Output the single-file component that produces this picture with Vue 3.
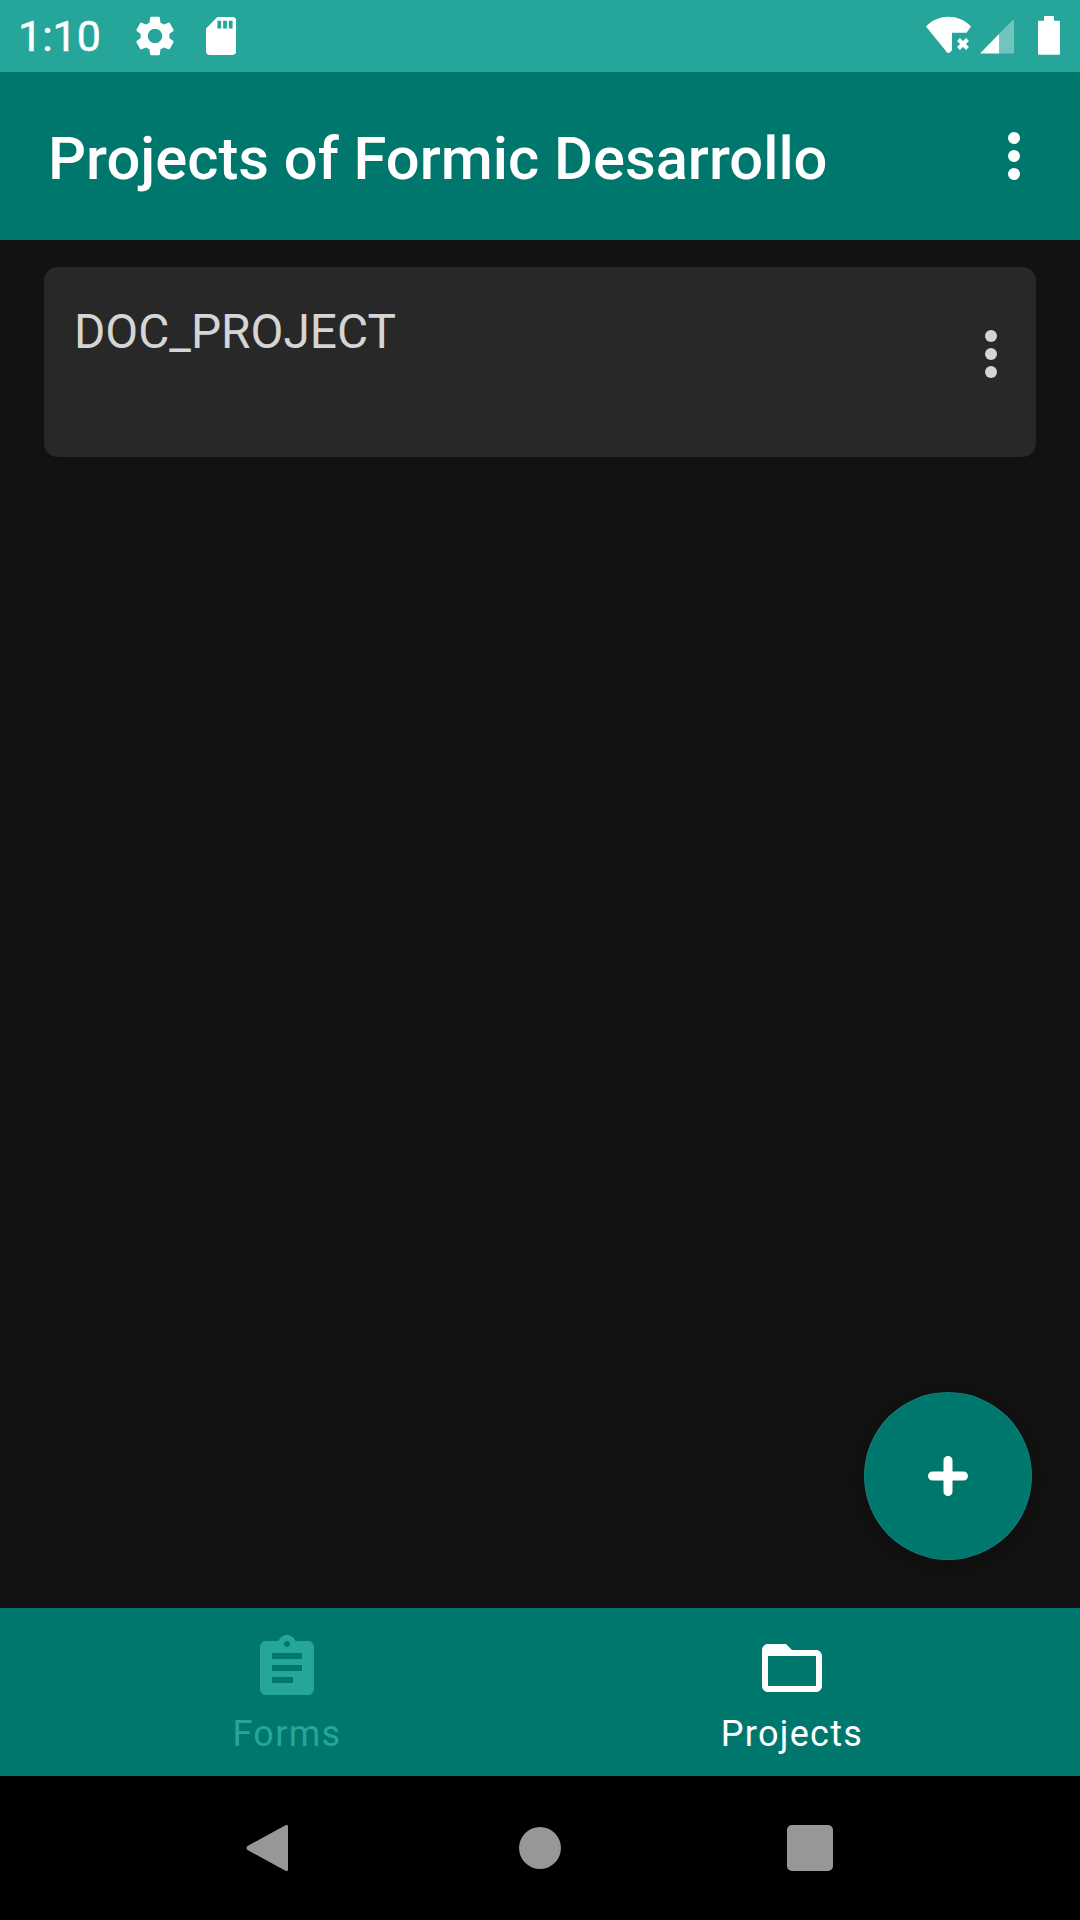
<script setup>
const tabs = [
  { label: 'Forms', active: false, d: 'M19 3h-4.18C14.4 1.84 13.3 1 12 1c-1.3 0-2.4.84-2.82 2H5c-1.1 0-2 .9-2 2v14c0 1.1.9 2 2 2h14c1.1 0 2-.9 2-2V5c0-1.1-.9-2-2-2zm-7 0c.55 0 1 .45 1 1s-.45 1-1 1-1-.45-1-1 .45-1 1-1zm2 14H7v-2h7v2zm3-4H7v-2h10v2zm0-4H7V7h10v2z' },
  { label: 'Projects', active: true, d: 'M20 6h-8l-2-2H4c-1.1 0-1.99.9-1.99 2L2 18c0 1.1.9 2 2 2h16c1.1 0 2-.9 2-2V8c0-1.1-.9-2-2-2zm0 12H4V8h16v10z' }
]
</script>

<template>
  <div class="screen">
    <div class="status-bar">
      <div class="status-left">
        <span class="time">1:10</span>
        <svg class="gear" viewBox="0 0 24 24"><path d="M19.14 12.94c.04-.3.06-.61.06-.94 0-.32-.02-.64-.07-.94l2.03-1.58c.18-.14.23-.41.12-.61l-1.92-3.32c-.12-.22-.37-.29-.59-.22l-2.39.96c-.5-.38-1.03-.7-1.62-.94l-.36-2.54c-.04-.24-.24-.41-.48-.41h-3.84c-.24 0-.43.17-.47.41l-.36 2.54c-.59.24-1.13.57-1.62.94l-2.39-.96c-.22-.08-.47 0-.59.22L2.74 8.87c-.12.21-.08.47.12.61l2.03 1.58c-.05.3-.09.63-.09.94s.02.64.07.94l-2.03 1.58c-.18.14-.23.41-.12.61l1.92 3.32c.12.22.37.29.59.22l2.39-.96c.5.38 1.03.7 1.62.94l.36 2.54c.05.24.24.41.48.41h3.84c.24 0 .44-.17.47-.41l.36-2.54c.59-.24 1.13-.56 1.62-.94l2.39.96c.22.08.47 0 .59-.22l1.92-3.32c.12-.22.07-.47-.12-.61l-2.01-1.58zM12 15.6c-1.98 0-3.6-1.62-3.6-3.6s1.62-3.6 3.6-3.6 3.6 1.62 3.6 3.6-1.62 3.6-3.6 3.6z" /></svg>
        <svg class="sd" viewBox="4 2 16 20"><path d="M18 2h-8L4.02 8 4 20c0 1.1.9 2 2 2h12c1.1 0 2-.9 2-2V4c0-1.1-.9-2-2-2zm-6 6h-2V4h2v4zm3 0h-2V4h2v4zm3 0h-2V4h2v4z" /></svg>
      </div>
      <div class="status-right">
        <svg class="wifi" viewBox="926 16 46 40">
          <path d="M926 26.5C932 20 940 16.7 948.5 16.7S965 20 971 26.5L966.500 32.700H952V50Q950.500 53 948.500 53T945.500 50.500Z" />
          <path d="M958.500 39.500L967.500 48.500M967.500 39.500L958.500 48.500" class="wifi-x" />
        </svg>
        <svg class="signal" viewBox="980 16 34 40">
          <path d="M999 34L1012.500 20.200Q1014 19.500 1014 21V52Q1014 53.500 1012.500 53.500H999Z" opacity="0.35" />
          <path d="M980 53.500L999 34V53.500Z" />
        </svg>
        <svg class="battery" viewBox="1038 16 22 40">
          <path d="M1044 16H1054V20.700H1059Q1060 20.700 1060 21.700V53.700Q1060 54.700 1059 54.700H1039Q1038 54.700 1038 53.700V21.700Q1038 20.700 1039 20.700H1044Z" />
        </svg>
      </div>
    </div>

    <header class="app-bar">
      <h1>Projects of Formic Desarrollo</h1>
      <div class="dots">
        <i></i><i></i><i></i>
      </div>
    </header>

    <main class="content">
      <div class="card">
        <span class="card-title">DOC_PROJECT</span>
        <div class="dots card-dots">
          <i></i><i></i><i></i>
        </div>
      </div>
      <button class="fab">
        <svg viewBox="0 0 40 40"><path d="M20 4.500V35.500M4.500 20H35.500" /></svg>
      </button>
    </main>

    <nav class="bottom-nav">
      <div v-for="tab in tabs" :key="tab.label" class="tab" :class="{ active: tab.active }">
        <svg viewBox="0 0 24 24"><path :d="tab.d" /></svg>
        <span>{{ tab.label }}</span>
      </div>
    </nav>

    <div class="system-nav">
      <svg class="back" viewBox="0 0 42 48"><path d="M39 1.500Q42 -0.500 42 3V45Q42 48.500 39 46.500L1.500 26Q-0.500 24 1.500 22Z" /></svg>
      <span class="home"></span>
      <span class="recent"></span>
    </div>
  </div>
</template>

<style>
body {
  background: #121212;
}
</style>

<style scoped>
.screen {
  width: 1080px;
  height: 1920px;
  display: flex;
  flex-direction: column;
  font-family: Roboto, sans-serif;
  background: #121212;
  overflow: hidden;
}

.status-bar {
  height: 72px;
  flex-shrink: 0;
  background: #26a69a;
  display: flex;
  justify-content: space-between;
  align-items: center;
  padding: 0 20px;
  fill: #fff;
}

.status-left,
.status-right {
  display: flex;
  align-items: center;
}

.time {
  width: 113px;
  margin-left: -2px;
  color: #fff;
  font-size: 43px;
  line-height: 48px;
  -webkit-text-stroke: 0.5px #fff;
}

.gear {
  width: 48px;
  height: 48px;
}

.sd {
  width: 30.4px;
  height: 38px;
  margin-left: 27px;
}

.wifi {
  width: 46px;
  height: 40px;
}

.wifi-x {
  fill: none;
  stroke: #fff;
  stroke-width: 4;
}

.signal {
  width: 34px;
  height: 40px;
  margin-left: 8px;
}

.battery {
  width: 22px;
  height: 40px;
  margin-left: 24px;
}

.app-bar {
  height: 168px;
  flex-shrink: 0;
  background: #00776c;
  display: flex;
  justify-content: space-between;
  align-items: center;
  padding: 0 60px 0 48px;
}

.app-bar h1 {
  margin: 6px 0 0;
  color: #fff;
  font-size: 59.7px;
  font-weight: 500;
  line-height: 70px;
}

.dots {
  display: flex;
  flex-direction: column;
  gap: 6px;
}

.dots i {
  display: block;
  width: 12px;
  height: 12px;
  border-radius: 50%;
  background: #fff;
}

.content {
  flex: 1;
  position: relative;
  padding: 27px 44px 0;
}

.card {
  height: 190px;
  background: #282828;
  border-radius: 14px;
  display: flex;
  justify-content: space-between;
  padding: 0 39px 0 30px;
}

.card-title {
  color: #d5d5d5;
  font-size: 47.8px;
  line-height: 56px;
  margin-top: 37px;
}

.card-dots {
  margin-top: 63px;
}

.card-dots i {
  background: #d5d5d5;
}

.fab {
  position: absolute;
  left: 864px;
  top: 1152px;
  width: 168px;
  height: 168px;
  padding: 0;
  border: none;
  border-radius: 50%;
  background: #00776c;
  box-shadow: 0 4px 16px rgba(0, 0, 0, 0.3), inset 0 0 0 1px rgba(255, 255, 255, 0.07);
  display: flex;
  align-items: center;
  justify-content: center;
}

.fab svg {
  width: 40px;
  height: 40px;
  fill: none;
  stroke: #fff;
  stroke-width: 9;
  stroke-linecap: round;
}

.bottom-nav {
  height: 168px;
  flex-shrink: 0;
  background: #00776c;
  display: flex;
  padding-left: 34.5px;
}

.tab {
  width: 505px;
  display: flex;
  flex-direction: column;
  align-items: center;
  padding-top: 24px;
  color: #26a69a;
  fill: #26a69a;
  font-size: 36px;
  letter-spacing: 1.3px;
}

.tab.active {
  color: #fff;
  fill: #fff;
}

.tab svg {
  width: 72px;
  height: 72px;
}

.tab span {
  line-height: 40px;
  margin-top: 10px;
}

.system-nav {
  height: 144px;
  flex-shrink: 0;
  background: #000;
  display: flex;
  align-items: center;
  padding-left: 246px;
}

.back {
  width: 42px;
  height: 48px;
  fill: #979797;
}

.home {
  width: 42px;
  height: 42px;
  border-radius: 50%;
  background: #979797;
  margin-left: 231px;
}

.recent {
  width: 46px;
  height: 46px;
  border-radius: 5px;
  background: #979797;
  margin-left: 226px;
}
</style>
